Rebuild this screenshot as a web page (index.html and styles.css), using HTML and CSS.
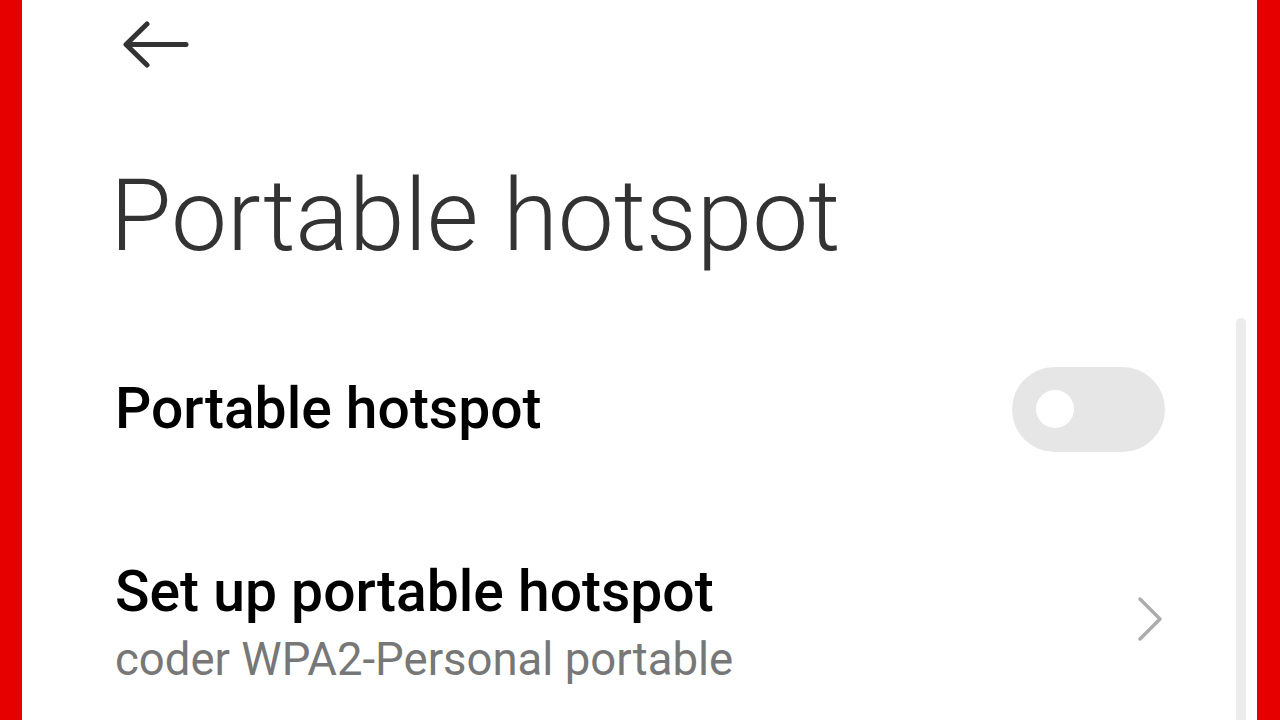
FILE: index.html
```html
<!DOCTYPE html>
<html lang="en">
<head>
  <meta charset="UTF-8" />
  <meta name="viewport" content="width=device-width, initial-scale=1.0" />
  <title>Portable hotspot</title>
  <link rel="stylesheet" href="styles.css">
</head>
<body>
  <div class="frame">
    <div class="screen">
      <div class="topbar">
        <svg class="back" width="68" height="48" viewBox="0 0 68 48">
          <path d="M64 23.5 H6 M25 3 L4 23.5 L25 44" fill="none" stroke="#333" stroke-width="5" stroke-linecap="round" stroke-linejoin="round"/>
        </svg>
      </div>
      <h1 class="title">Portable hotspot</h1>

      <div class="row toggle-row">
        <div class="row-text">
          <div class="row-title">Portable hotspot</div>
        </div>
        <div class="switch"><span class="knob"></span></div>
      </div>

      <div class="row link-row">
        <div class="row-text">
          <div class="row-title">Set up portable hotspot</div>
          <div class="row-sub">coder WPA2-Personal portable</div>
        </div>
        <svg class="chevron" width="28" height="46" viewBox="0 0 28 46">
          <path d="M4 3 L24 23 L4 43" fill="none" stroke="#acacac" stroke-width="3.5" stroke-linecap="round" stroke-linejoin="round"/>
        </svg>
      </div>
    </div>
    <div class="scrollbar"><div class="thumb"></div></div>
  </div>
</body>
</html>
```

FILE: styles.css
```css
html, body {
  margin: 0;
  height: 100%;
}
body {
  font-family: Roboto, "Noto Sans", sans-serif;
  background: #fff;
  color: #000;
  overflow: hidden;
}
.frame {
  display: flex;
  height: 720px;
  border-left: 22px solid #e60000;
  border-right: 23px solid #e60000;
  background: #fff;
}
.screen {
  flex: 1;
  padding-left: 93px;
  padding-right: 71px;
}
.topbar {
  height: 90px;
  padding-top: 21px;
  padding-left: 7px;
  box-sizing: border-box;
}
.back {
  display: block;
}
.title {
  margin: 66px 0 0 -5px;
  font-size: 100px;
  font-weight: 300;
  color: #333;
  line-height: 120px;
}
.row {
  display: flex;
  align-items: center;
  justify-content: space-between;
}
.toggle-row {
  margin-top: 88px;
  height: 90px;
}
.row-title {
  font-size: 57px;
  font-weight: 500;
  line-height: 66px;
  color: #000;
}
.row-sub {
  font-size: 45.5px;
  color: #777;
  line-height: 54px;
  margin-top: 8px;
}
.switch {
  width: 153px;
  height: 85px;
  border-radius: 43px;
  background: #e6e6e6;
  display: flex;
  align-items: center;
  padding-left: 24px;
  box-sizing: border-box;
}
.knob {
  width: 38px;
  height: 38px;
  border-radius: 50%;
  background: #fff;
}
.link-row {
  margin-top: 105px;
}
.chevron {
  margin-right: 1px;
  margin-top: -8px;
}
.scrollbar {
  width: 21px;
  padding-top: 318px;
  box-sizing: border-box;
}
.thumb {
  width: 10px;
  height: 402px;
  background: #ececec;
  border-radius: 5px 5px 0 0;
}
```
